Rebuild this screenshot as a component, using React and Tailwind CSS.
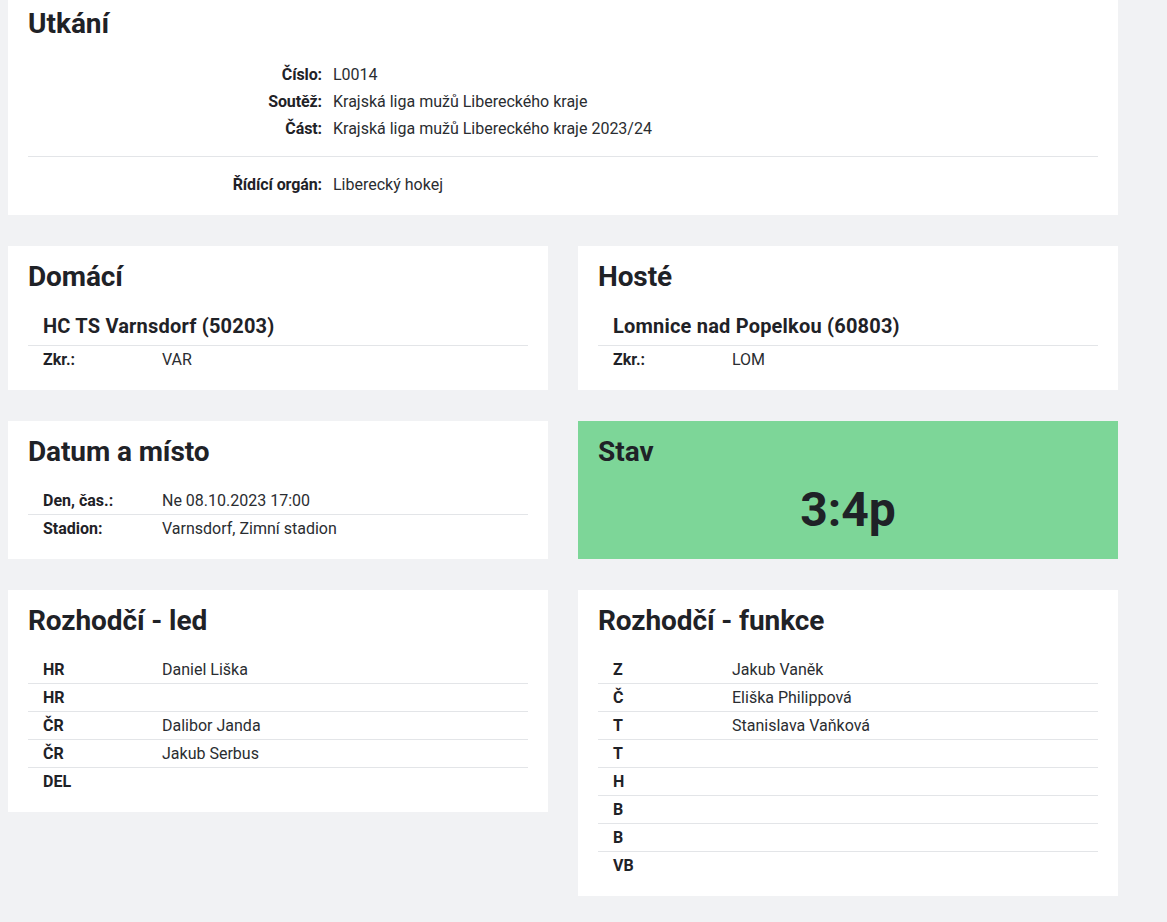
import React from 'react';

const ink = 'text-[#1f2227]';

function Card({ title, children, className = '' }) {
  return (
    <div className={`bg-white px-5 pt-[14px] pb-4 ${className}`}>
      <h2 className="text-[28px] font-bold leading-[34px] tracking-[-0.1px]">{title}</h2>
      {children}
    </div>
  );
}

function Rows({ rows, className = '' }) {
  return (
    <div className={className}>
      {rows.map(([label, value], i) => (
        <div
          key={i}
          className={`grid grid-cols-[119px_1fr] items-center h-7 px-[15px] ${i < rows.length - 1 ? 'border-b border-[#e3e5e8]' : ''}`}
        >
          <span className="font-bold text-[16px]">{label}</span>
          <span className="text-[16px] text-[#2a2d31]">{value}</span>
        </div>
      ))}
    </div>
  );
}

function Team({ title, name, code }) {
  return (
    <Card title={title}>
      <div className="mt-5 px-[15px] pb-[7px] border-b border-[#e3e5e8] text-[20px] font-bold leading-6 tracking-[0.2px]">{name}</div>
      <Rows rows={[['Zkr.:', code]]} />
    </Card>
  );
}

export default function App() {
  const info = [
    ['Číslo:', 'L0014'],
    ['Soutěž:', 'Krajská liga mužů Libereckého kraje'],
    ['Část:', 'Krajská liga mužů Libereckého kraje 2023/24'],
  ];

  return (
    <div className={`min-h-screen bg-[#f1f2f4] px-2 pb-6 font-['Roboto',sans-serif] ${ink}`}>
      <div className="w-[1110px] flex flex-col gap-[31px]">
        <div className="bg-white px-5 pt-[7px] pb-[17px]">
          <h2 className="text-[28px] font-bold leading-[34px]">Utkání</h2>
          <div className="mt-5 flex flex-col">
            {info.map(([l, v]) => (
              <div key={l} className="grid grid-cols-[294px_1fr] gap-x-[11px] h-[27px] items-center">
                <span className="text-right font-bold text-[16px] tracking-[-0.1px]">{l}</span>
                <span className="text-[16px] text-[#2a2d31]">{v}</span>
              </div>
            ))}
          </div>
          <div className="mt-[14px] border-t border-[#e3e5e8]" />
          <div className="mt-[14px] grid grid-cols-[294px_1fr] gap-x-[11px] h-[27px] items-center">
            <span className="text-right font-bold text-[16px] tracking-[-0.1px]">Řídící orgán:</span>
            <span className="text-[16px] text-[#2a2d31]">Liberecký hokej</span>
          </div>
        </div>

        <div className="grid grid-cols-2 gap-x-[30px]">
          <Team title="Domácí" name="HC TS Varnsdorf (50203)" code="VAR" />
          <Team title="Hosté" name="Lomnice nad Popelkou (60803)" code="LOM" />
        </div>

        <div className="grid grid-cols-2 gap-x-[30px]">
          <Card title="Datum a místo">
            <Rows
              className="mt-[18px]"
              rows={[
                ['Den, čas.:', 'Ne 08.10.2023 17:00'],
                ['Stadion:', 'Varnsdorf, Zimní stadion'],
              ]}
            />
          </Card>
          <div className="bg-[#7dd698] px-5 pt-[14px] pb-4">
            <h2 className="text-[28px] font-bold leading-[34px]">Stav</h2>
            <div className="mt-[13px] text-center text-[48px] font-bold leading-[56px]">3:4p</div>
          </div>
        </div>

        <div className="grid grid-cols-2 gap-x-[30px] items-start">
          <Card title="Rozhodčí - led">
            <Rows
              className="mt-[18px]"
              rows={[
                ['HR', 'Daniel Liška'],
                ['HR', ''],
                ['ČR', 'Dalibor Janda'],
                ['ČR', 'Jakub Serbus'],
                ['DEL', ''],
              ]}
            />
          </Card>
          <Card title="Rozhodčí - funkce">
            <Rows
              className="mt-[18px]"
              rows={[
                ['Z', 'Jakub Vaněk'],
                ['Č', 'Eliška Philippová'],
                ['T', 'Stanislava Vaňková'],
                ['T', ''],
                ['H', ''],
                ['B', ''],
                ['B', ''],
                ['VB', ''],
              ]}
            />
          </Card>
        </div>
      </div>
    </div>
  );
}
